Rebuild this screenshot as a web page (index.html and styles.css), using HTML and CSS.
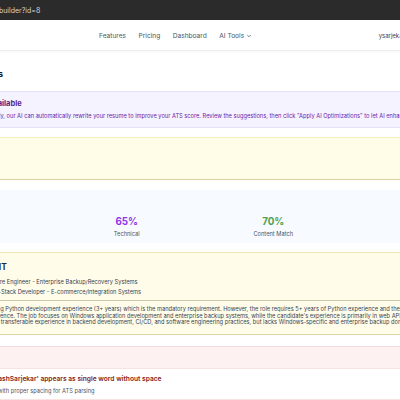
FILE: index.html
```html
<!DOCTYPE html>
<html lang="en">
<head>
    <meta charset="UTF-8">
    <meta name="viewport" content="width=device-width, initial-scale=1.0">
    <title>Resume Builder</title>
    <link rel="stylesheet" href="styles.css">
</head>
<body>

<div class="urlbar">
    <span class="url">localhost:3000/resume-builder?id=8</span>
</div>

<header class="navbar">
    <div class="nav-inner">
        <a class="logo" href="#">ResumeAI</a>
        <nav class="nav-links">
            <a href="#">Features</a>
            <a href="#">Pricing</a>
            <a href="#">Dashboard</a>
            <a href="#">AI Tools
                <svg class="chev" viewBox="0 0 10 10"><path d="M2.5 3.8 5 6.3l2.5-2.5" fill="none" stroke="currentColor" stroke-width="1.2" stroke-linecap="round" stroke-linejoin="round"/></svg>
            </a>
        </nav>
        <div class="user">
            <span class="username">ysarjekar</span>
            <button class="logout">Logout</button>
        </div>
    </div>
</header>

<main class="page">
    <div class="container">

        <div class="title-row">
            <h1>AI Resume Suggestions</h1>
            <button class="btn-apply">
                <svg viewBox="0 0 16 16"><path d="M8 1.5l1.6 4.2 4.2 1.6-4.2 1.6L8 13.1 6.4 8.9 2.2 7.3l4.2-1.6z" fill="currentColor"/></svg>
                Apply AI Optimizations
            </button>
        </div>

        <section class="ai-box">
            <h3>
                <span class="ai-icon">
                    <svg viewBox="0 0 16 16"><path d="M8 1.5l1.6 4.2 4.2 1.6-4.2 1.6L8 13.1 6.4 8.9 2.2 7.3l4.2-1.6z" fill="currentColor"/></svg>
                </span>
                AI Optimization Available
            </h3>
            <p>To boost your match scores quickly, our AI can automatically rewrite your resume to improve your ATS score. Review the suggestions, then click "Apply AI Optimizations" to let AI enhance your resume content.</p>
        </section>

        <section class="warn-box">
            <h3>Missing Keywords</h3>
            <p>C++, Windows, NAS</p>
        </section>

        <section class="scores">
            <h3>Score Breakdown</h3>
            <div class="score-grid">
                <div class="score"><b class="blue">58%</b><span>Keywords</span></div>
                <div class="score"><b class="purple">65%</b><span>Technical</span></div>
                <div class="score"><b class="green">70%</b><span>Content Match</span></div>
                <div class="score"><b class="orange">60%</b><span>Format</span></div>
            </div>
        </section>

        <section class="fit-box">
            <h3>Job Match: PARTIAL FIT</h3>
            <ul class="roles">
                <li>Target Role: Senior Python Software Engineer - Enterprise Backup/Recovery Systems</li>
                <li>Your Last Role: Senior Python Full-Stack Developer - E-commerce/Integration Systems</li>
            </ul>
            <p class="fit-text">The candidate demonstrates strong Python development experience (3+ years) which is the mandatory requirement. However, the role requires 5+ years of Python experience and the candidate falls short on total years of broad professional experience. The job focuses on Windows application development and enterprise backup systems, while the candidate's experience is primarily in web API development and e-commerce integrations. They do bring strong transferable experience in backend development, CI/CD, and software engineering practices, but lacks Windows-specific and enterprise backup domain knowledge.</p>
        </section>

        <section class="issues">
            <h3>Critical Issues</h3>
            <div class="issue">
                <h4>Contact Details - Name 'YashSarjekar' appears as single word without space</h4>
                <p>Write name as 'Yash Sarjekar' with proper spacing for ATS parsing</p>
            </div>
            <div class="issue">
                <h4>Missing section headers</h4>
                <p>Add clear headers</p>
            </div>
        </section>

    </div>
</main>

</body>
</html>
```

FILE: styles.css
```css
* {
    box-sizing: border-box;
}

body {
    margin: 0;
    font-family: Inter, "Noto Sans", sans-serif;
    background: #fff;
    color: #111827;
    overflow: hidden;
}

h1, h3, h4, p, ul {
    margin: 0;
}

/* browser address bar */
.urlbar {
    height: 20px;
    background: #2b2b2b;
    display: flex;
    align-items: center;
    overflow: hidden;
}

.url {
    margin-left: -81px;
    font-size: 7px;
    color: #d4d4d4;
    white-space: nowrap;
}

/* top navigation */
.navbar {
    height: 31px;
    padding-top: 1px;
    background: #fff;
    border-bottom: 1px solid #ededed;
    box-shadow: 0 1px 2px rgba(0, 0, 0, 0.04);
    display: flex;
    justify-content: center;
}

.nav-inner {
    width: 602px;
    flex: none;
    display: flex;
    align-items: center;
}

.logo {
    width: 120px;
    flex: none;
    font-size: 9px;
    font-weight: 700;
    color: #7c3aed;
    text-decoration: none;
}

.nav-links {
    display: flex;
    gap: 12.5px;
    margin-left: 80px;
}

.nav-links a {
    display: flex;
    align-items: center;
    gap: 1.5px;
    font-size: 6.6px;
    color: #4b5563;
    text-decoration: none;
}

.chev {
    width: 6px;
    height: 6px;
}

.user {
    display: flex;
    align-items: center;
    gap: 8px;
    margin-left: 127px;
}

.username {
    font-size: 6px;
    color: #374151;
}

.logout {
    font-family: inherit;
    font-size: 6px;
    border: none;
    background: #f3f4f6;
    border-radius: 3px;
    padding: 3px 6px;
}

/* page */
.page {
    display: flex;
    justify-content: center;
}

.container {
    width: 602px;
    flex: none;
}

.title-row {
    display: flex;
    justify-content: space-between;
    align-items: center;
    padding: 12px 0 8px;
}

.title-row h1 {
    font-size: 9px;
    font-weight: 700;
    color: #111827;
}

.btn-apply {
    display: flex;
    align-items: center;
    gap: 3px;
    height: 20px;
    padding: 0 8px;
    border: none;
    border-radius: 3px;
    background: #8a2ff0;
    color: #fff;
    font-family: inherit;
    font-size: 6.6px;
    font-weight: 600;
}

.btn-apply svg {
    width: 7px;
    height: 7px;
}

.ai-box {
    background: #f5f3ff;
    border: 1px solid #e6e0f8;
    padding: 7px 8px;
}

.ai-box h3 {
    display: flex;
    align-items: center;
    gap: 4px;
    font-size: 7.5px;
    line-height: 10px;
    font-weight: 700;
    color: #581c87;
}

.ai-icon {
    width: 18px;
    height: 10px;
    display: flex;
    justify-content: center;
    align-items: center;
    color: #8a2ff0;
}

.ai-icon svg {
    width: 9px;
    height: 9px;
}

.ai-box p {
    margin-top: 3px;
    font-size: 5.7px;
    line-height: 8px;
    color: #6b21a8;
    white-space: nowrap;
}

.warn-box {
    margin-top: 9px;
    background: #fffde8;
    border: 1px solid #f7efc0;
    border-bottom-color: #d8d1a4;
    padding: 9px 8px;
}

.warn-box h3,
.scores h3,
.issues h3 {
    font-size: 7.5px;
    line-height: 11px;
    font-weight: 700;
}

.warn-box p {
    margin-top: 4px;
    font-size: 5.7px;
    line-height: 8px;
    color: #374151;
}

.scores {
    margin-top: 10px;
    background: #f7faff;
    padding: 8px 8px 5px;
}

.scores h3 {
    line-height: 10px;
}

.score-grid {
    display: grid;
    grid-template-columns: repeat(4, 1fr);
    margin-top: 6.5px;
}

.score {
    display: flex;
    flex-direction: column;
    align-items: center;
}

.score b {
    font-size: 9.8px;
    line-height: 14px;
    font-weight: 700;
}

.score span {
    margin-top: 1.5px;
    font-size: 5.7px;
    line-height: 8px;
    color: #4b5563;
}

.blue { color: #2563eb; }
.purple { color: #9333ea; }
.green { color: #4ca154; }
.orange { color: #ea580c; }

.fit-box {
    margin-top: 9px;
    background: #fffde9;
    border: 1px solid #efe6b4;
    border-bottom-color: #ddd6a8;
    padding: 7.5px 8px 8px;
}

.fit-box h3 {
    font-size: 8.45px;
    line-height: 12px;
    font-weight: 700;
    color: #1f2937;
}

.roles {
    list-style: none;
    padding: 0;
    margin-top: 5px;
}

.roles li {
    font-size: 5.7px;
    line-height: 8px;
    color: #374151;
}

.roles li + li {
    margin-top: 2.7px;
}

.fit-text {
    margin-top: 3.5px;
    padding-top: 5.5px;
    border-top: 1px solid #cdc7ae;
    font-size: 5.7px;
    line-height: 6.5px;
    color: #374151;
}

.issues {
    margin-top: 11px;
    background: #fdf1f1;
    border-top: 1px solid #f2dada;
    padding: 6px 8px;
}

.issues h3 {
    line-height: 10px;
    color: #7f1d1d;
}

.issue {
    margin-top: 5px;
    background: #fff;
    border: 1px solid #f8e3e3;
    border-radius: 3px;
    padding: 6px 8px 4px;
}

.issue h4 {
    font-size: 6.65px;
    line-height: 9px;
    font-weight: 600;
    color: #7f1d1d;
}

.issue p {
    margin-top: 3px;
    font-size: 5.7px;
    line-height: 8px;
    color: #4b5563;
}
```
